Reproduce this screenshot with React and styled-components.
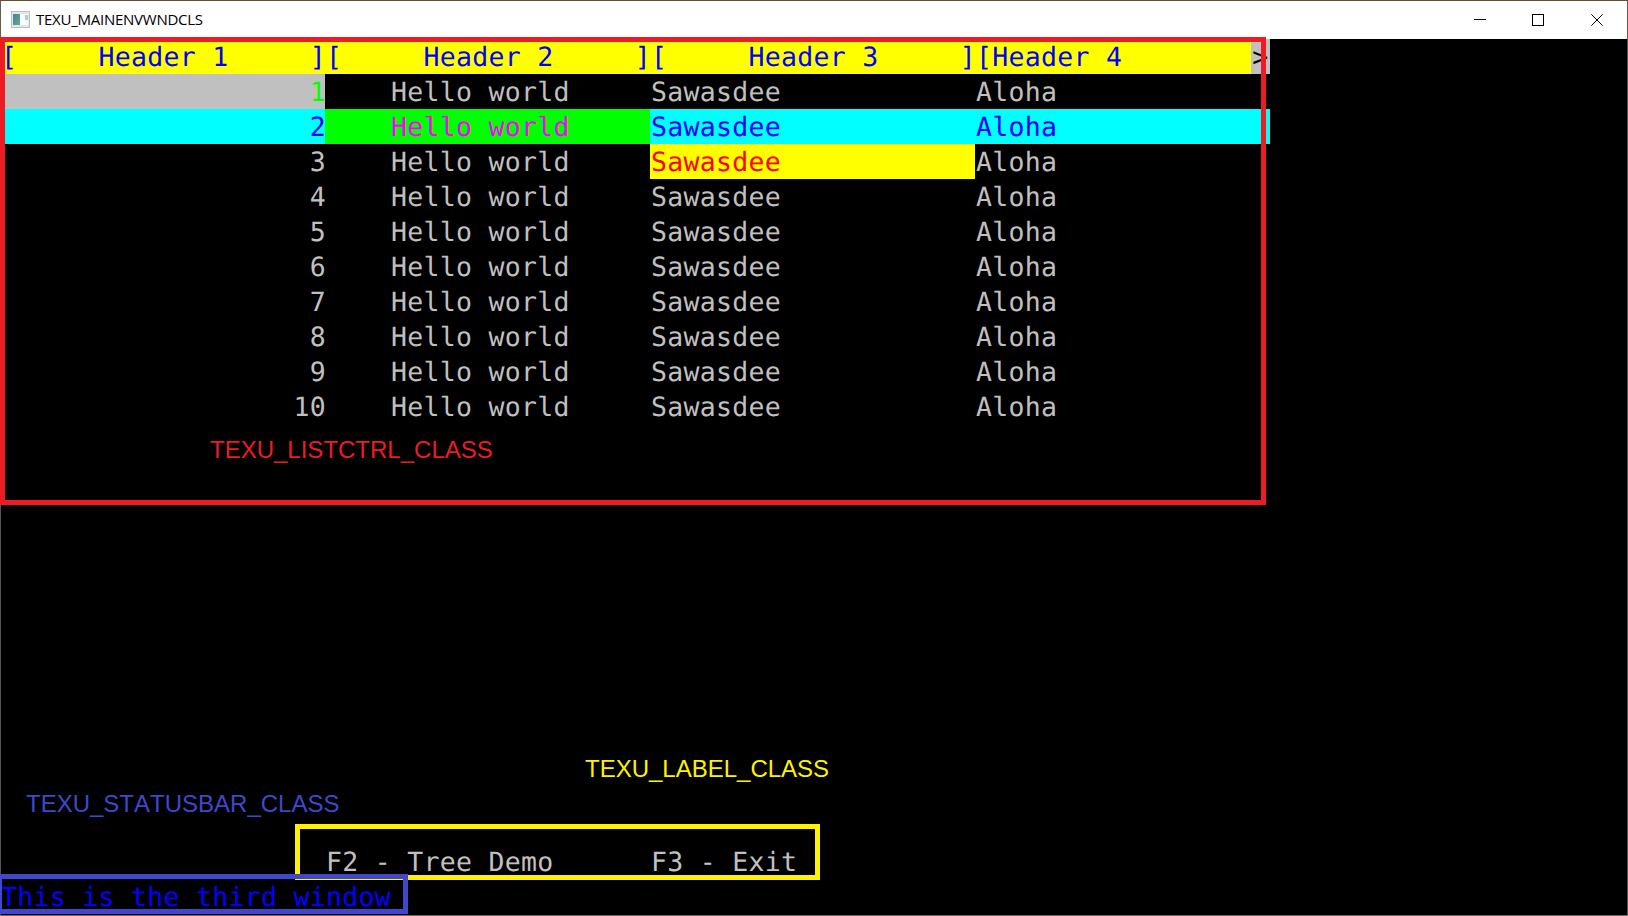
import React from 'react';
import styled, { createGlobalStyle } from 'styled-components';

const CELL = 16.25;
const ROW = 35;

const GlobalStyle = createGlobalStyle`
  html, body { margin: 0; padding: 0; background: #000; overflow: hidden; }
  * { box-sizing: border-box; }
`;

const Window = styled.div`
  position: relative;
  width: 1628px;
  height: 916px;
  display: flex;
  flex-direction: column;
  background: #000;
  border-top: 1px solid #664f30;
  border-bottom: 1px solid #6b6b6b;
  overflow: hidden;
`;

const TitleBar = styled.header`
  display: flex;
  align-items: center;
  height: 38px;
  flex: none;
  margin: 0 1px;
  padding: 0 0 1px 10px;
  background: #fff;
`;

const Title = styled.h1`
  flex: 1;
  margin: 0 0 2px 6px;
  font: 400 15px/20px "Open Sans", "Noto Sans", sans-serif;
  letter-spacing: -0.25px;
  color: #000;
  white-space: nowrap;
`;

const Controls = styled.div`
  display: flex;
  height: 100%;
`;

const ControlButton = styled.button`
  display: flex;
  align-items: center;
  justify-content: center;
  width: ${(p) => (p.$last ? 60 : 58)}px;
  padding: 0;
  border: 0;
  background: transparent;
`;

const Screen = styled.main`
  display: flex;
  flex-direction: column;
  height: ${25 * ROW}px;
  font-family: "DejaVu Sans Mono", "Liberation Mono", monospace;
  font-size: 26.5px;
  letter-spacing: 0.296px;
  text-rendering: geometricPrecision;
  color: #c0c0c0;
`;

const Line = styled.div`
  display: flex;
  flex: none;
  height: ${ROW}px;
  line-height: ${ROW + 3}px;
  width: ${(p) => (p.$wide ? 1269.6 : 1626)}px;
  background: ${(p) => p.$bg || 'transparent'};
`;

const Cell = styled.span`
  display: block;
  flex: ${(p) => (p.$cols ? 'none' : '1')};
  width: ${(p) => (p.$cols ? `${p.$cols * CELL}px` : 'auto')};
  height: ${ROW}px;
  white-space: pre;
  text-align: ${(p) => p.$align || 'left'};
  text-indent: ${(p) => (p.$align ? 0 : 1)}px;
  color: ${(p) => p.$fg || 'inherit'};
  background: ${(p) => p.$bg || 'transparent'};
`;

const Value = styled.span`
  margin-right: -1px;
`;

const Spacer = styled.div`
  flex: 1;
`;

const Frame = styled.div`
  position: absolute;
  left: ${(p) => p.$x}px;
  top: ${(p) => p.$y}px;
  width: ${(p) => p.$w}px;
  height: ${(p) => p.$h}px;
  border: 5px solid ${(p) => p.$color};
`;

const Note = styled.span`
  position: absolute;
  left: ${(p) => p.$x}px;
  top: ${(p) => p.$y}px;
  font: 400 24px/28px "Liberation Sans", Arial, sans-serif;
  font-kerning: none;
  color: ${(p) => p.$color};
  white-space: nowrap;
`;

const Edge = styled.div`
  position: absolute;
  ${(p) => p.$side}: 0;
  top: 0;
  width: 1px;
  height: 915px;
  background: linear-gradient(#6a5c48 0 37px, #555 38px);
`;

const rows = Array.from({ length: 10 }, (_, i) => i + 1);

const palette = {
  1: { number: { $bg: '#c0c0c0', $fg: '#00ff00' } },
  2: {
    line: '#00ffff',
    number: { $fg: '#0000ff' },
    hello: { $bg: '#00ff00', $fg: '#ff00ff' },
    thai: { $fg: '#0000ff' },
    aloha: { $fg: '#0000ff' },
  },
  3: { thai: { $bg: '#ffff00', $fg: '#ff0000' } },
};

const IconSvg = styled.svg`
  margin-top: -1px;
`;

function AppIcon() {
  return (
    <IconSvg width="19" height="17" viewBox="0 0 19 17">
      <defs>
        <linearGradient id="pane" x1="0" y1="0" x2="1" y2="1">
          <stop offset="0" stopColor="#4a7fa0" />
          <stop offset="1" stopColor="#5fae84" />
        </linearGradient>
      </defs>
      <rect x="0.5" y="0.5" width="18" height="16" fill="#e4e7e7" stroke="#bcbfc0" />
      <rect x="2" y="3" width="15" height="11" fill="#f8fafb" />
      <rect x="2" y="3" width="7" height="11" fill="url(#pane)" />
      <rect x="14" y="4" width="3" height="5" fill="#a9cfd0" />
    </IconSvg>
  );
}

export default function App() {
  return (
    <>
      <GlobalStyle />
      <Window>
        <TitleBar>
          <AppIcon />
          <Title>TEXU_MAINENVWNDCLS</Title>
          <Controls>
            <ControlButton aria-label="Minimize">
              <svg width="12" height="12"><path d="M0 5.5H12" stroke="#000" /></svg>
            </ControlButton>
            <ControlButton aria-label="Maximize">
              <svg width="12" height="12"><rect x="0.5" y="0.5" width="11" height="11" fill="none" stroke="#000" /></svg>
            </ControlButton>
            <ControlButton $last aria-label="Close">
              <svg width="12" height="12"><path d="M0.3 0.3L11.7 11.7M11.7 0.3L0.3 11.7" stroke="#000" /></svg>
            </ControlButton>
          </Controls>
        </TitleBar>
        <Screen>
          <Line $wide $bg="#ffff00">
            <Cell $cols={20} $fg="#0000ff">{'[     Header 1     ]'}</Cell>
            <Cell $cols={20} $fg="#0000ff">{'[     Header 2     ]'}</Cell>
            <Cell $cols={20} $fg="#0000ff">{'[     Header 3     ]'}</Cell>
            <Cell $cols={17} $fg="#0000ff">{'[Header 4'}</Cell>
            <Cell $fg="#000" $bg="#c0c0c0">{'>'}</Cell>
          </Line>
          {rows.map((n) => {
            const p = palette[n] || {};
            return (
              <Line key={n} $wide $bg={p.line}>
                <Cell $cols={20} $align="right" {...p.number}><Value>{n}</Value></Cell>
                <Cell $cols={20} {...p.hello}>{'    Hello world'}</Cell>
                <Cell $cols={20} {...p.thai}>Sawasdee</Cell>
                <Cell {...p.aloha}>Aloha</Cell>
              </Line>
            );
          })}
          <Spacer />
          <Line>
            <Cell $cols={20} />
            <Cell $cols={20}>F2 - Tree Demo</Cell>
            <Cell $cols={20}>F3 - Exit</Cell>
          </Line>
          <Line>
            <Cell $fg="#0000ff">This is the third window</Cell>
          </Line>
        </Screen>
        <Edge $side="left" />
        <Edge $side="right" />
        <Frame $x={0} $y={36} $w={1266} $h={468} $color="#ed1c24" />
        <Frame $x={295} $y={823} $w={525} $h={56} $color="#fff200" />
        <Frame $x={-3} $y={873} $w={411} $h={40} $color="#3f48cc" />
        <Note $x={210} $y={435} $color="#ed1c24">TEXU_LISTCTRL_CLASS</Note>
        <Note $x={585} $y={754} $color="#fff200">TEXU_LABEL_CLASS</Note>
        <Note $x={26} $y={789} $color="#3f48cc">TEXU_STATUSBAR_CLASS</Note>
      </Window>
    </>
  );
}
